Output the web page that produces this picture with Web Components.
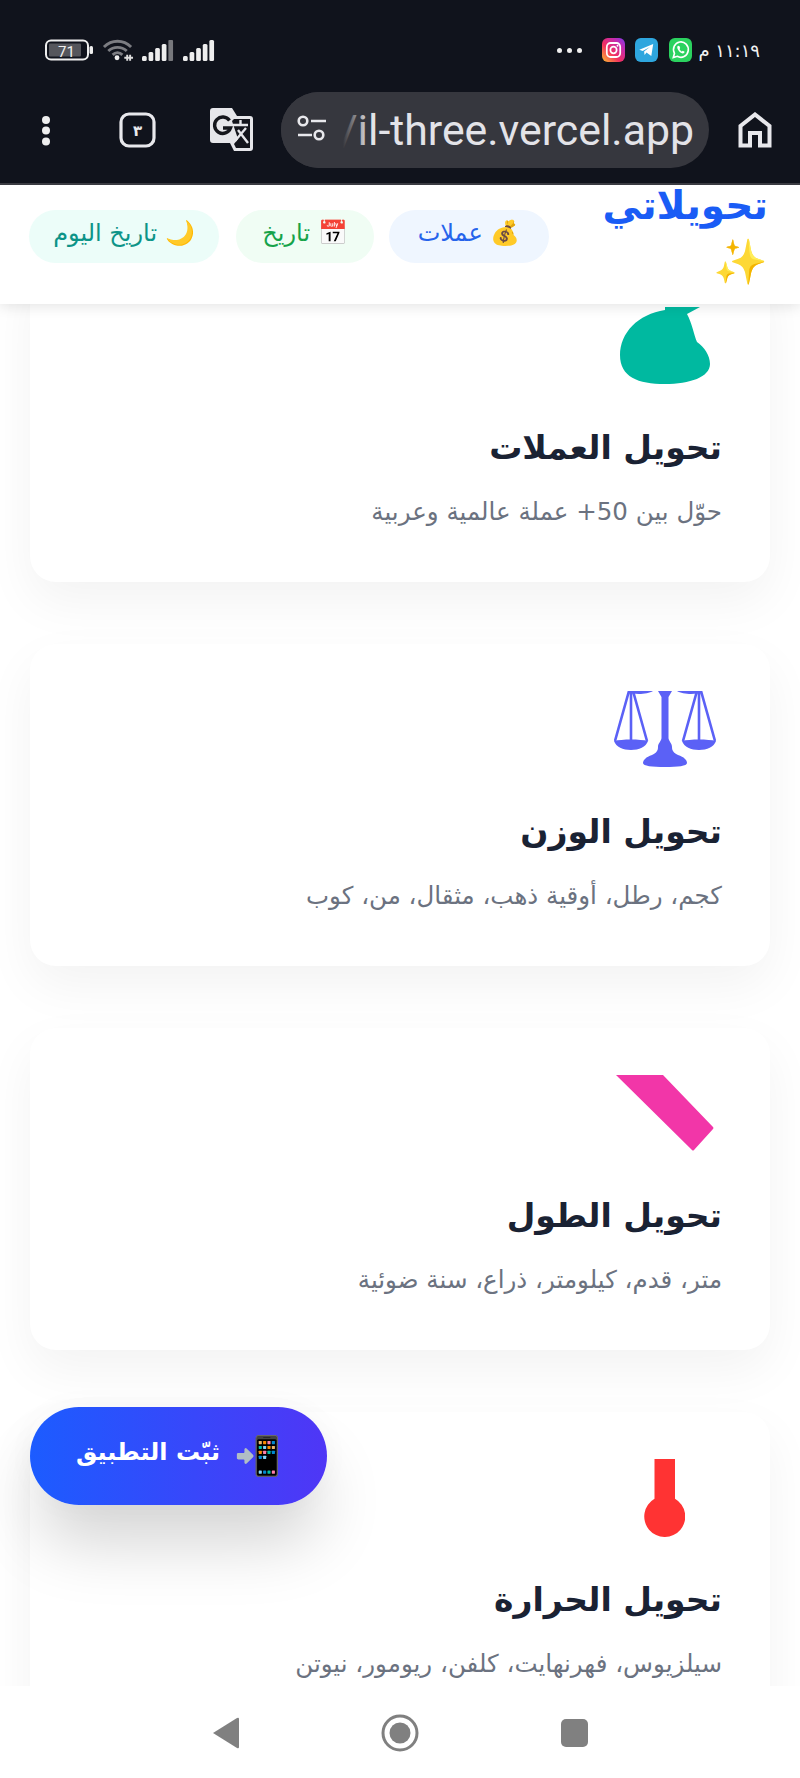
<!DOCTYPE html>
<html lang="ar"><head><meta charset="utf-8">
<style>
html,body{margin:0;padding:0;background:#fff}
body{width:800px;height:1778px;overflow:hidden;display:flex;flex-direction:column;position:relative;font-family:"Noto Sans","DejaVu Sans",sans-serif}
</style></head><body>
<browser-chrome></browser-chrome>
<app-header>
  <nav-pill style="--bg:#eff6ff;--fg:#2563eb;--w:160px">💰 عملات</nav-pill>
  <nav-pill style="--bg:#f0fdf4;--fg:#16a34a;--w:138px">📅 تاريخ</nav-pill>
  <nav-pill style="--bg:#ecfdf9;--fg:#0d9488;--w:190px">🌙 تاريخ اليوم</nav-pill>
</app-header>
<card-list>
  <convert-card heading="تحويل العملات" text="حوّل بين 50+ عملة عالمية وعربية" style="--mr:12px">
    <svg width="90" height="77" viewBox="0 0 90 77"><path fill="#00b9a0" d="M45 0H80L67 7C72 16 74 28 77 35C84 40 90 48 90 57C90 70 70 77 45 77C18 77 0 70 0 48C0 26 18 7 45 3Z"/></svg>
  </convert-card>
  <convert-card heading="تحويل الوزن" text="كجم، رطل، أوقية ذهب، مثقال، من، كوب" style="--mr:6px">
    <svg width="102" height="76" viewBox="0 0 102 76"><g fill="#5b61f6"><path d="M44 0H58L54.500 6V47C54.500 50 58 52 58 56C58 60 60 62 64 64C70 66 73 69 73 72C73 75 64 76 51 76C38 76 29 75 29 72C29 69 32 66 38 64C42 62 44 60 44 56C44 52 47.500 50 47.500 47V6Z"/><path d="M14 0H39C36 2 30 3 25 3C20 3 16 2 14 0ZM63 0H88C86 2 82 3 77 3C72 3 66 2 63 0Z"/><path d="M0 50C8 48 26 48 34 50C32 56 25 59 17 59C9 59 2 56 0 50ZM68 50C76 48 94 48 102 50C100 56 93 59 85 59C77 59 70 56 68 50Z"/></g><g fill="none" stroke="#5b61f6" stroke-width="2.600"><path d="M15 0L1 50M17 0V49M19 0L33 50M87 0L101 50M85 0V49M83 0L69 50"/></g></svg>
  </convert-card>
  <convert-card heading="تحويل الطول" text="متر، قدم، كيلومتر، ذراع، سنة ضوئية" style="--mr:8px">
    <svg width="98" height="76" viewBox="0 0 98 76"><path fill="#f236a8" d="M0 0H47L97 52Q98 53 97 54L78 75Q77 76 76 75Z"/></svg>
  </convert-card>
  <convert-card heading="تحويل الحرارة" text="سيلزيوس، فهرنهايت، كلفن، ريومور، نيوتن" style="--mr:37px">
    <svg width="41" height="78" viewBox="0 0 41 78"><path fill="#ff3333" d="M10.500 0H31V39.750A20.500 20.500 0 1 1 10.500 39.750Z"/></svg>
  </convert-card>
</card-list>
<install-button>ثبّت التطبيق</install-button>
<system-nav></system-nav>
<script>
function def(name,html,setup){
  customElements.define(name,class extends HTMLElement{
    constructor(){super();this.attachShadow({mode:'open'}).innerHTML=html;}
    connectedCallback(){if(setup)setup(this,this.shadowRoot);}
  });
}
def('browser-chrome',`<style>
:host{display:block;height:183px;background:#10131c;border-bottom:2px solid #3a3b42;box-sizing:content-box;flex:none;position:relative;z-index:3;color:#e8e8ec}
.status{height:92px;display:flex;justify-content:space-between;align-items:flex-start;padding:38px 40px 0 45px;box-sizing:border-box}
.l,.r{display:flex;align-items:center;height:24px}
.l svg{display:block}
.time{font:18px "DejaVu Sans",sans-serif;color:#f2f2f2;margin-left:6px;direction:rtl}
.dots{display:flex;gap:5px;margin-right:20px}.dots i{width:5px;height:5px;border-radius:50%;background:#eee}
.tool{height:91px;display:flex;align-items:flex-start;padding-top:0;position:relative}
.addr{position:absolute;left:281px;top:0;width:428px;height:76px;background:#36373e;border-radius:38px;overflow:hidden;display:flex;align-items:center}
.url{position:absolute;right:15px;top:0;font:42.800px/76px Roboto,sans-serif;color:#e3e3e8;white-space:nowrap}
.fade{position:absolute;left:0;top:0;width:88px;height:76px;background:linear-gradient(90deg,#36373e 0,#36373e 62px,#36373e00 88px)}
.ic{position:absolute;display:block}
</style>
<div class="status"><div class="l">
<svg width="49" height="22" viewBox="0 0 49 22"><rect x="1" y="1.500" width="42" height="19" rx="5" fill="none" stroke="#eee" stroke-width="2"/><rect x="4" y="4.500" width="32" height="13" rx="1" fill="#55565c"/><rect x="44.500" y="7" width="3.500" height="8" rx="1.500" fill="#eee"/><text x="13" y="18" font-family="Roboto" font-size="15" fill="#eee">71</text></svg>
<svg style="margin-left:8px" width="32" height="24" viewBox="0 0 33 24"><path d="M2 9C10 1 22 1 30 9M6.500 13C12 8 20 8 25.500 13M11 17C14 14 18 14 21 17" fill="none" stroke="#7c7d82" stroke-width="3"/><circle cx="15.500" cy="20" r="2.500" fill="#eee"/><path d="M23 20H32M26 17v6M29 17v6" stroke="#ddd" stroke-width="2"/></svg>
<svg style="margin-left:8px" width="32" height="22" viewBox="0 0 34 22" preserveAspectRatio="none"><g fill="#eee"><rect x="0" y="17" width="5" height="5" rx="1.500"/><rect x="7" y="13" width="5" height="9" rx="1.500"/><rect x="14" y="9" width="5" height="13" rx="1.500"/><rect x="21" y="5" width="5" height="17" rx="1.500"/></g><rect x="28" y="1" width="5" height="21" rx="1" fill="#77787c"/></svg>
<svg style="margin-left:9px" width="32" height="22" viewBox="0 0 34 22" preserveAspectRatio="none"><g fill="#eee"><rect x="0" y="17" width="5" height="5" rx="1.500"/><rect x="7" y="13" width="5" height="9" rx="1.500"/><rect x="14" y="9" width="5" height="13" rx="1.500"/><rect x="21" y="5" width="5" height="17" rx="1.500"/><rect x="28" y="1" width="5" height="21" rx="1.500"/></g></svg>
</div><div class="r">
<div class="dots"><i></i><i></i><i></i></div>
<svg width="23" height="24" viewBox="0 0 24 24" preserveAspectRatio="none"><defs><linearGradient id="ig" x1="0" y1="1" x2="1" y2="0"><stop offset="0" stop-color="#fdc030"/><stop offset=".4" stop-color="#f2305f"/><stop offset=".75" stop-color="#c32bb0"/><stop offset="1" stop-color="#7a3cf0"/></linearGradient></defs><rect width="24" height="24" rx="6" fill="url(#ig)"/><rect x="5" y="5" width="14" height="14" rx="4" fill="none" stroke="#fff" stroke-width="1.800"/><circle cx="12" cy="12" r="3.300" fill="none" stroke="#fff" stroke-width="1.800"/><circle cx="16.200" cy="7.800" r="1" fill="#fff"/></svg>
<svg style="margin-left:10px" width="23" height="24" viewBox="0 0 24 24" preserveAspectRatio="none"><rect width="24" height="24" rx="6" fill="#2ea6de"/><path d="M4.500 11.800L19 6L17 18L12 14.500L10 17L9.500 13.500L15.500 9L8 13Z" fill="#fff"/></svg>
<svg style="margin-left:11px" width="23" height="24" viewBox="0 0 24 24" preserveAspectRatio="none"><rect width="24" height="24" rx="6" fill="#2bd25f"/><path d="M4.500 19.500L5.700 15.300A7.700 7.700 0 1 1 8.700 18.300Z" fill="none" stroke="#fff" stroke-width="1.700"/><path d="M9.300 7.800C8 9 8.500 11 10.500 13.200C12.500 15.300 14.600 16 15.900 14.800L16.300 13.800L14.400 12.800L13.400 13.600C12.500 13.200 11.400 12 11 11L11.700 10.100L10.800 8L9.300 7.800Z" fill="#fff"/></svg>
<span class="time">١١:١٩ م</span>
</div></div>
<div class="tool">
<svg class="ic" style="left:41px;top:23px" width="10" height="31" viewBox="0 0 10 31"><g fill="#eee"><circle cx="5" cy="5" r="4"/><circle cx="5" cy="15.500" r="4"/><circle cx="5" cy="26.500" r="4"/></g></svg>
<svg class="ic" style="left:119px;top:20px" width="37" height="36" viewBox="0 0 37 36"><rect x="2" y="2" width="33" height="32" rx="8" fill="none" stroke="#e8e8ec" stroke-width="3.200"/><text x="18.500" y="24" text-anchor="middle" font-family="DejaVu Sans" font-weight="700" font-size="15" fill="#e8e8ec">٣</text></svg>
<svg class="ic" style="left:210px;top:16px" width="44" height="44" viewBox="0 0 44 44"><path d="M3 0H22L27 8H40Q43 8 43 11V40Q43 43 40 43H24L20 35H3Q0 35 0 32V3Q0 0 3 0Z" fill="#e6e6ea"/><path d="M24 11H40V40H26L24 36L28 31L22 13Z" fill="#14151c"/><path d="M19.500 12.500A8.200 8.200 0 1 0 20.500 20H13" fill="none" stroke="#15161c" stroke-width="3.400"/><path d="M23 17H38M30.500 12V17M25 33L36 20M28 22L38 35" fill="none" stroke="#e6e6ea" stroke-width="2.400"/></svg>
<div class="addr"><span class="url">/il-three.vercel.app</span><span class="fade"></span>
<svg class="ic" style="left:16px;top:22px" width="30" height="30" viewBox="0 0 30 30"><g fill="none" stroke="#e8e8ec" stroke-width="2.600"><circle cx="6" cy="7" r="4.300"/><path d="M14 7H29M1 21H15"/><circle cx="22" cy="21" r="4.300"/></g></svg></div>
<svg class="ic" style="left:738px;top:20px" width="34" height="36" viewBox="0 0 34 36"><path d="M2.500 33.500V14L17 2.500L31.500 14V33.500H22V21H12V33.500Z" fill="none" stroke="#e8e8ec" stroke-width="4"/></svg>
</div>`);
def('app-header',`<style>
:host{display:flex;flex:none;height:119px;background:#fff;box-shadow:0 3px 12px rgba(0,0,0,.1);position:relative;z-index:2;overflow:hidden;direction:rtl;align-items:flex-start;font-family:"DejaVu Sans",sans-serif}
.brand{width:170px;margin-right:32px;font:700 39px/46px "DejaVu Sans",sans-serif;color:#1a5cf5;margin-top:-2px;flex:none;text-align:right}
.brand span{display:block;font-size:44px;line-height:66px;font-weight:400}
.pills{display:flex;gap:15px;margin-top:25px;margin-right:49px}
::slotted(nav-pill:last-child){margin-right:2px}
</style><div class="brand">تحويلاتي <span>✨</span></div><div class="pills"><slot></slot></div>`);
def('nav-pill',`<style>
:host{display:flex;align-items:center;justify-content:center;height:53px;box-sizing:border-box;padding-bottom:7px;width:var(--w);border-radius:27px;background:var(--bg);color:var(--fg);font:24px "DejaVu Sans",sans-serif;white-space:nowrap;direction:rtl}
</style><slot></slot>`);
def('card-list',`<style>
:host{display:flex;flex-direction:column;gap:62px;padding:0 30px;margin-top:-44px;flex:none;direction:rtl}
</style><slot></slot>`);
def('convert-card',`<style>
:host{display:block;height:322px;box-sizing:border-box;padding:47px 48px 0;background:#fff;border-radius:26px;box-shadow:0 20px 50px rgba(0,0,0,.05);font-family:"DejaVu Sans",sans-serif;flex:none}
.icon{height:119px;display:flex;justify-content:flex-start;margin-right:var(--mr)}
h3{margin:0;font:700 33px/44px "DejaVu Sans",sans-serif;color:#1a2233}
p{margin:27px 0 0;font:24.500px/30px "DejaVu Sans",sans-serif;color:#6b7280;white-space:nowrap}
</style><div class="icon"><slot></slot></div><h3></h3><p></p>`,(el,s)=>{s.querySelector('h3').textContent=el.getAttribute('heading');s.querySelector('p').textContent=el.getAttribute('text');});
def('install-button',`<style>
:host{position:absolute;left:30px;top:1407px;width:297px;height:98px;border-radius:49px;background:linear-gradient(90deg,#1c5cff,#4f36f6);box-shadow:0 44px 64px -6px rgba(0,0,0,.17),0 0 30px rgba(0,0,0,.03);color:#fff;font:700 24px "DejaVu Sans",sans-serif;display:flex;align-items:center;justify-content:center;gap:14px;direction:rtl;z-index:1}
span{font-size:38px;line-height:50px}
.t{font-size:24px;position:relative;top:-4px}
</style><span>📲</span><span class="t"><slot></slot></span>`);
def('system-nav',`<style>
:host{position:absolute;left:0;right:0;top:1686px;height:92px;background:#fff;z-index:4;display:block}
svg{position:absolute}
</style>
<svg style="left:213px;top:31px" width="26" height="32" viewBox="0 0 26 32"><path d="M0 16L24 1Q26 0 26 2V30Q26 32 24 31Z" fill="#808080"/></svg>
<svg style="left:381px;top:28px" width="38" height="38" viewBox="0 0 38 38"><circle cx="19" cy="19" r="17" fill="none" stroke="#808080" stroke-width="3"/><circle cx="19" cy="19" r="10.500" fill="#808080"/></svg>
<svg style="left:561px;top:33px" width="27" height="28" viewBox="0 0 27 28"><rect width="27" height="28" rx="5" fill="#808080"/></svg>`);
</script>
</body></html>
